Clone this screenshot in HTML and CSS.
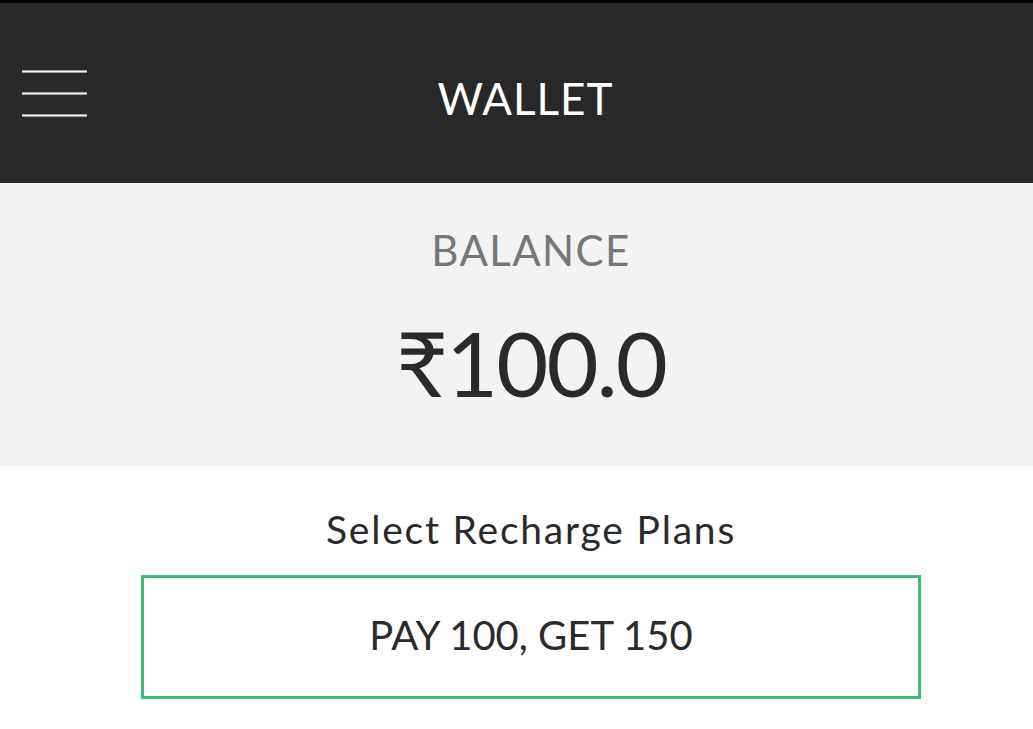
FILE: index.html
```html
<!DOCTYPE html>
<html lang="en">
<head>
  <meta charset="UTF-8">
  <meta name="viewport" content="width=device-width, initial-scale=1.0">
  <title>Wallet</title>
  <link rel="stylesheet" href="styles.css">
</head>
<body>
  <header class="topbar">
    <div class="menu-btn">
      <span></span>
      <span></span>
      <span></span>
    </div>
    <h1 class="title">WALLET</h1>
  </header>
  <section class="balance">
    <div class="balance-label">BALANCE</div>
    <div class="balance-amount">₹100.0</div>
  </section>
  <section class="plans">
    <div class="plans-title">Select Recharge Plans</div>
    <div class="plan">PAY 100, GET 150</div>
  </section>
</body>
</html>
```

FILE: styles.css
```css
body{
  margin: 0;
  font-family: "Lato", "DejaVu Sans", sans-serif;
  background-color: #fff;
  color: #2a2a2a;
}
.topbar{
  box-sizing: border-box;
  height: 183px;
  border-top: 3px solid #000;
  background-color: #282828;
  display: flex;
  align-items: center;
  padding: 0 69px 0 22px;
}
.menu-btn{
  width: 65px;
  height: 47px;
  display: flex;
  flex-direction: column;
  justify-content: space-between;
}
.menu-btn span{
  display: block;
  height: 3px;
  background: linear-gradient(#777, #eee, #777);
}
.title{
  flex: 1;
  margin: 0;
  padding-top: 9px;
  text-align: center;
  color: #fff;
  font-size: 44px;
  font-weight: normal;
  line-height: 1;
  letter-spacing: 1px;
}
.balance{
  background-color: #f3f3f3;
  text-align: center;
  padding: 46px 0 59px 29px;
}
.balance-label{
  font-size: 42px;
  line-height: 1;
  color: #777;
  letter-spacing: 1.4px;
}
.balance-amount{
  margin-top: 46px;
  font-size: 90px;
  line-height: 1;
  color: #2a2a2a;
  letter-spacing: -2px;
}
.plans{
  padding: 44px 0 0 29px;
  text-align: center;
}
.plans-title{
  font-size: 39px;
  line-height: 1;
  letter-spacing: 1.8px;
}
.plan{
  width: 780px;
  box-sizing: border-box;
  margin: 26px auto 0;
  border: 3px solid #3dba7a;
  padding: 37px 0 41px;
  font-size: 40px;
  line-height: 1;
  color: #2b2b2b;
}
```
